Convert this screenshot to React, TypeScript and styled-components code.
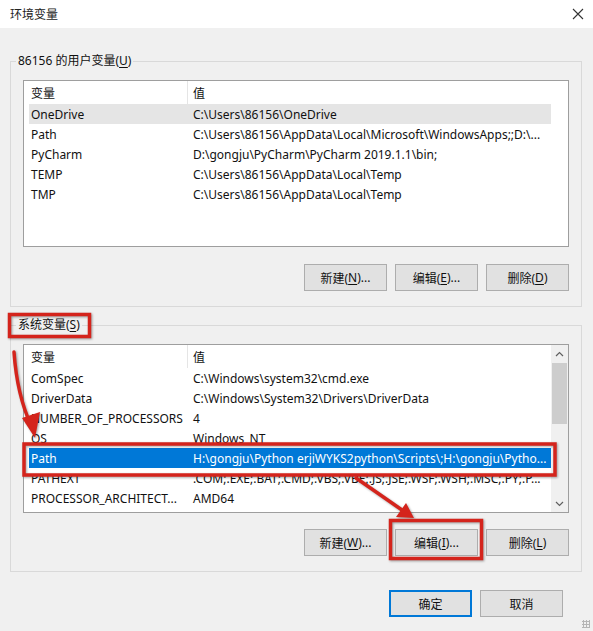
import React from "react";
import styled, { createGlobalStyle } from "styled-components";

const GlobalStyle = createGlobalStyle`
  html, body {
    margin: 0;
    padding: 0;
    background: #f0f0f0;
  }
`;

const uiFont = `"Noto Sans", "Noto Sans CJK SC", sans-serif`;
const annotationRed = "#d4241c";

interface IVar {
  name: string;
  value: string;
  selected?: boolean;
  hovered?: boolean;
}

const userVars: IVar[] = [
  { name: "OneDrive", value: "C:\\Users\\86156\\OneDrive", hovered: true },
  {
    name: "Path",
    value: "C:\\Users\\86156\\AppData\\Local\\Microsoft\\WindowsApps;;D:\\...",
  },
  { name: "PyCharm", value: "D:\\gongju\\PyCharm\\PyCharm 2019.1.1\\bin;" },
  { name: "TEMP", value: "C:\\Users\\86156\\AppData\\Local\\Temp" },
  { name: "TMP", value: "C:\\Users\\86156\\AppData\\Local\\Temp" },
];

const systemVars: IVar[] = [
  { name: "ComSpec", value: "C:\\Windows\\system32\\cmd.exe" },
  { name: "DriverData", value: "C:\\Windows\\System32\\Drivers\\DriverData" },
  { name: "NUMBER_OF_PROCESSORS", value: "4" },
  { name: "OS", value: "Windows_NT" },
  {
    name: "Path",
    value: "H:\\gongju\\Python erjiWYKS2python\\Scripts\\;H:\\gongju\\Pytho...",
    selected: true,
  },
  {
    name: "PATHEXT",
    value: ".COM;.EXE;.BAT;.CMD;.VBS;.VBE;.JS;.JSE;.WSF;.WSH;.MSC;.PY;.P...",
  },
  { name: "PROCESSOR_ARCHITECT...", value: "AMD64" },
];

const Window = styled.div`
  position: relative;
  width: 593px;
  height: 631px;
  background: #f0f0f0;
  display: flex;
  flex-direction: column;
  overflow: hidden;
  font-family: ${uiFont};
  font-size: 12px;
  color: #111;
`;

const TitleBar = styled.div`
  height: 28px;
  flex-shrink: 0;
  background: #fff;
  display: flex;
  align-items: center;
  justify-content: space-between;
  padding: 0 8px 0 10px;
`;

const Title = styled.span`
  font-size: 12px;
  color: #222;
`;

const CloseButton = styled.div`
  width: 14px;
  height: 14px;
  display: flex;
  align-items: center;
  justify-content: center;
`;

const Content = styled.div`
  display: flex;
  flex-direction: column;
  padding: 25px 11px 0 10px;
`;

const Group = styled.fieldset<{ $top?: number }>`
  margin: ${(p) => p.$top ?? 0}px 0 0 0;
  padding: 11px 12px 15px 12px;
  border: 1px solid #d9d9d9;
  min-width: 0;
`;

const Legend = styled.legend`
  margin-left: -7px;
  padding: 0 2px;
  line-height: 16px;
  font-size: 12px;
  color: #111;
`;

const Underline = styled.span`
  text-decoration: underline;
  text-underline-offset: 2px;
`;

const ListBox = styled.div<{ $height: number }>`
  height: ${(p) => p.$height}px;
  background: #fff;
  border: 1px solid #9e9e9e;
  display: flex;
  box-sizing: border-box;
`;

const ListBody = styled.div`
  flex: 1;
  display: flex;
  flex-direction: column;
  padding-right: 17px;
`;

const HeaderRow = styled.div`
  height: 23px;
  display: grid;
  grid-template-columns: 163px 1fr;
  align-items: stretch;
`;

const HeaderCell = styled.div<{ $divider?: boolean }>`
  display: flex;
  align-items: center;
  padding-left: ${(p) => (p.$divider ? 5 : 7)}px;
  border-left: ${(p) => (p.$divider ? "1px solid #e5e5e5" : "none")};
`;

const Row = styled.div<{ $selected?: boolean; $hovered?: boolean }>`
  height: 20px;
  margin-left: 5px;
  display: grid;
  grid-template-columns: 158px 1fr;
  align-items: center;
  background: ${(p) =>
    p.$selected ? "#0078d7" : p.$hovered ? "#e5e5e5" : "transparent"};
  color: ${(p) => (p.$selected ? "#fff" : "#111")};
  white-space: nowrap;
  overflow: hidden;
`;

const NameCell = styled.span`
  padding-left: 2px;
  overflow: hidden;
`;

const ValueCell = styled.span`
  padding-left: 6px;
  overflow: hidden;
`;

const ScrollBar = styled.div`
  width: 17px;
  flex-shrink: 0;
  background: #f0f0f0;
  display: flex;
  flex-direction: column;
`;

const ScrollArrow = styled.div`
  height: 17px;
  display: flex;
  align-items: center;
  justify-content: center;
`;

const ScrollTrack = styled.div`
  flex: 1;
  padding: 1px 1px 0 1px;
`;

const ScrollThumb = styled.div`
  height: 61px;
  background: #cdcdcd;
`;

const ButtonRow = styled.div<{ $top: number }>`
  display: flex;
  justify-content: flex-end;
  gap: 8px;
  margin-top: ${(p) => p.$top}px;
`;

const Button = styled.div<{ $default?: boolean }>`
  width: 83px;
  height: 27px;
  box-sizing: border-box;
  background: #e1e1e1;
  border: 1px solid ${(p) => (p.$default ? "#0078d7" : "#adadad")};
  box-shadow: ${(p) => (p.$default ? "inset 0 0 0 1px #0078d7" : "none")};
  display: flex;
  align-items: center;
  justify-content: center;
  font-size: 12px;
  color: #111;
`;

const Footer = styled.div`
  display: flex;
  justify-content: flex-end;
  gap: 8px;
  margin-top: 18px;
  padding-right: 19px;
`;

const Grip = styled.div`
  position: absolute;
  right: 3px;
  bottom: 3px;
  width: 8px;
  height: 8px;
  background-image: radial-gradient(circle, #b5b5b5 1px, transparent 1.2px);
  background-size: 3px 3px;
`;

const Overlay = styled.svg`
  position: absolute;
  left: 0;
  top: 0;
  pointer-events: none;
  filter: drop-shadow(1px 1px 1px rgba(0, 0, 0, 0.35));
`;

const VarList: React.FC<{ vars: IVar[]; height: number; scroll?: boolean }> = ({
  vars,
  height,
  scroll,
}) => (
  <ListBox $height={height}>
    <ListBody style={scroll ? { paddingRight: 0 } : undefined}>
      <HeaderRow>
        <HeaderCell>变量</HeaderCell>
        <HeaderCell $divider>值</HeaderCell>
      </HeaderRow>
      {vars.map((v) => (
        <Row key={v.name} $selected={v.selected} $hovered={v.hovered}>
          <NameCell>{v.name}</NameCell>
          <ValueCell>{v.value}</ValueCell>
        </Row>
      ))}
    </ListBody>
    {scroll && (
      <ScrollBar>
        <ScrollArrow>
          <svg width="9" height="6" viewBox="0 0 9 6">
            <path d="M1 5 L4.5 1.5 L8 5" fill="none" stroke="#606060" strokeWidth="1.2" />
          </svg>
        </ScrollArrow>
        <ScrollTrack>
          <ScrollThumb />
        </ScrollTrack>
        <ScrollArrow>
          <svg width="9" height="6" viewBox="0 0 9 6">
            <path d="M1 1 L4.5 4.5 L8 1" fill="none" stroke="#606060" strokeWidth="1.2" />
          </svg>
        </ScrollArrow>
      </ScrollBar>
    )}
  </ListBox>
);

export default function App() {
  return (
    <Window>
      <GlobalStyle />
      <TitleBar>
        <Title>环境变量</Title>
        <CloseButton>
          <svg width="12" height="12" viewBox="0 0 12 12">
            <path d="M1 1 L11 11 M11 1 L1 11" stroke="#333" strokeWidth="1.1" />
          </svg>
        </CloseButton>
      </TitleBar>
      <Content>
        <Group>
          <Legend>
            86156 的用户变量(<Underline>U</Underline>)
          </Legend>
          <VarList vars={userVars} height={167} />
          <ButtonRow $top={17}>
            <Button>
              新建(<Underline>N</Underline>)...
            </Button>
            <Button>
              编辑(<Underline>E</Underline>)...
            </Button>
            <Button>
              删除(<Underline>D</Underline>)
            </Button>
          </ButtonRow>
        </Group>
        <Group $top={10}>
          <Legend>
            系统变量(<Underline>S</Underline>)
          </Legend>
          <VarList vars={systemVars} height={169} scroll />
          <ButtonRow $top={16}>
            <Button>
              新建(<Underline>W</Underline>)...
            </Button>
            <Button>
              编辑(<Underline>I</Underline>)...
            </Button>
            <Button>
              删除(<Underline>L</Underline>)
            </Button>
          </ButtonRow>
        </Group>
        <Footer>
          <Button $default>确定</Button>
          <Button>取消</Button>
        </Footer>
      </Content>
      <Grip />
      <Overlay width="593" height="631" viewBox="0 0 593 631">
        <g fill="none" stroke={annotationRed} strokeWidth="3.5">
          <rect x="9.5" y="314.5" width="80" height="22" />
          <rect x="24" y="444" width="531" height="31" />
          <rect x="390.5" y="520.5" width="91" height="38" />
          <path d="M14 352 Q17 395 31 425" strokeLinecap="round" />
          <path d="M356 478 L402 510" strokeLinecap="round" />
        </g>
        <g fill={annotationRed}>
          <path d="M22 418 L40 412 L35 438 Z" />
          <path d="M396 517 L406 503 L414 518 Z" />
        </g>
      </Overlay>
    </Window>
  );
}
